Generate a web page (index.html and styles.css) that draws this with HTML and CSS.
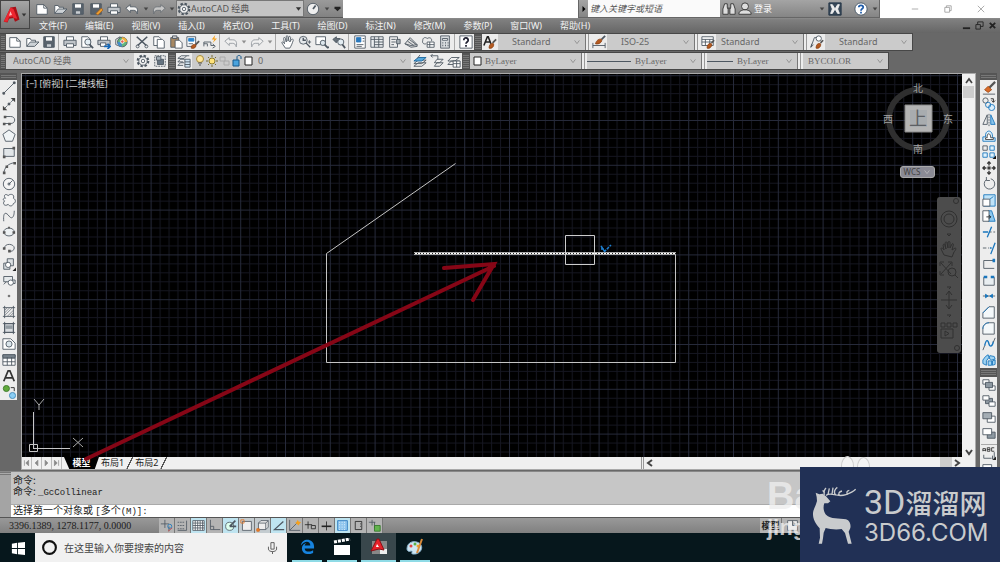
FILE: index.html
```html
<!DOCTYPE html>
<html lang="zh-CN">
<head>
<meta charset="utf-8">
<title>AutoCAD 经典</title>
<link rel="stylesheet" href="styles.css">
</head>
<body>
<svg class="sprite" aria-hidden="true">
<symbol id="new" viewBox="0 0 16 16"><path d="M2 3h8l4 4v7H2z" fill="#fff"/><path d="M10 3v4h4"/></symbol>
<symbol id="open" viewBox="0 0 16 16"><path d="M2 13V4h4l1 2h5v2" fill="#fff"/><path d="M2 13l4-5h10l-5 5z" fill="#cdd2d6"/></symbol>
<symbol id="save" viewBox="0 0 16 16"><path d="M2 2h12v12H2z" fill="#59636d"/><path d="M4 2h8v5H4z" fill="#fff"/><path d="M5 10h6v4H5z" fill="#c8cdd2"/></symbol>
<symbol id="saveas" viewBox="0 0 16 16"><path d="M2 2h12v12H2z" fill="#59636d"/><path d="M4 2h8v5H4z" fill="#fff"/><path d="M8 13l6-6 2 2-6 6z" fill="#f0a030" stroke="#a06020"/></symbol>
<symbol id="print" viewBox="0 0 16 16"><path d="M4 6V2h8v4" fill="#fff"/><path d="M1 6h14v6H1z" fill="#bfc4c9"/><path d="M4 10h8v4H4z" fill="#fff"/></symbol>
<symbol id="preview" viewBox="0 0 16 16"><path d="M2 2h7l3 3v9H2z" fill="#fff"/><circle cx="9" cy="8" r="3.500" fill="#e4eef4"/><path d="M11 11l4 4" stroke-width="2"/></symbol>
<symbol id="plot" viewBox="0 0 16 16"><path d="M4 6V2h8v4" fill="#fff"/><path d="M1 6h14v5H1z" fill="#bfc4c9"/><path d="M4 9h6v4H4z" fill="#fff"/><path d="M8 13h7m-3-3l3 3-3 3" stroke="#1668b8" stroke-width="2"/></symbol>
<symbol id="globe" viewBox="0 0 16 16"><path d="M2 5l5-3v11l-5-2z" fill="#eee"/><circle cx="9.500" cy="8" r="5.500" fill="#64b77b"/><path d="M9 2.500a5.500 5.500 0 0 1 6 5.500H9z" fill="#f3b13d" stroke="none"/><path d="M4 8h5v5.500a5.500 5.500 0 0 1-5-5.500z" fill="#438fcb" stroke="none"/><circle cx="9.500" cy="7.500" r="2" fill="#e86454" stroke="#fff"/></symbol>
<symbol id="cut" viewBox="0 0 16 16"><path d="M2 2l11 10M14 2L3 12" stroke-width="1.8"/><circle cx="3" cy="13" r="1.700"/><circle cx="13" cy="13" r="1.700"/></symbol>
<symbol id="copy" viewBox="0 0 16 16"><path d="M2 2h6l2 2v8H2z" fill="#fff"/><path d="M6 5h6l2 2v8H6z" fill="#fff"/></symbol>
<symbol id="paste" viewBox="0 0 16 16"><path d="M2 3h9v11H2z" fill="#a78862"/><path d="M4 1h5v3H4z" fill="#ccc"/><path d="M7 6h5l3 3v6H7z" fill="#fff"/></symbol>
<symbol id="match" viewBox="0 0 16 16"><path d="M1 2h10v11H1z" fill="#fff"/><path d="M3 4h6v3H3z" fill="#2b86ce" stroke="#2b86ce"/><path d="M3 10h5"/><path d="M15 7l-4 4" stroke="#555" stroke-width="2"/><path d="M6 15c0-3 2-5 5-4 1 3-2 5-5 4z" fill="#b65a20" stroke="#8a4216"/></symbol>
<symbol id="block" viewBox="0 0 16 16"><path d="M1 13V8h8v4h4M1 10h4v3" /><path d="M11 10l3 3-3 2"/><path d="M14 0l-4 5h3l-2 4 5-5h-3z" fill="#f6a11c" stroke="none"/></symbol>
<symbol id="undo" viewBox="0 0 16 16"><path d="M1 7l5-4v2.500h4c4 0 5 3 4 8-1-3-2-4-4-4H6V12z" fill="#f4f4f4"/></symbol>
<symbol id="redo" viewBox="0 0 16 16"><path d="M15 7l-5-4v2.500H6c-4 0-5 3-4 8 1-3 2-4 4-4h4V12z" fill="#f4f4f4"/></symbol>
<symbol id="drop" viewBox="0 0 8 8"><path d="M1 2h6L4 6z" fill="currentColor" stroke="none"/></symbol>
<symbol id="pan" viewBox="0 0 16 16"><path d="M5 15L1 9c0-2 2-1 3 1L3 4c0-2 2-1 2 0l1 4V2c0-2 2-1 2 0v5l1-5c1-1 2 0 2 1l-1 5 2-3c1-1 2 0 2 1-1 3-2 6-4 9z" fill="#fff"/></symbol>
<symbol id="zoom" viewBox="0 0 16 16"><circle cx="6" cy="6" r="4.500" fill="#e4e8eb"/><path d="M6 3v3h3M9 9l5 5" stroke-width="1.600"/><path d="M11 8h4M13 6v4"/></symbol>
<symbol id="zoomwin" viewBox="0 0 16 16"><path d="M1 2h11v9H1z" fill="#fff"/><circle cx="9" cy="9" r="3" fill="#dce6ec"/><path d="M11 11l4 4M14 14h2" stroke-width="2"/></symbol>
<symbol id="zoomprev" viewBox="0 0 16 16"><path d="M1 5l4-3v2h4v3H5v2z" fill="#68727b"/><circle cx="10" cy="8" r="3.500" fill="#e4eef4"/><path d="M12 11l3 4" stroke-width="2"/></symbol>
<symbol id="props" viewBox="0 0 16 16"><path d="M2 1h12v14H2z" fill="#fff"/><path d="M4 3h5v5H4z" fill="#2878bd" stroke="#2878bd"/><path d="M11 4h2M11 7h2M4 11h8M4 13h6"/></symbol>
<symbol id="dc" viewBox="0 0 16 16"><path d="M1 2h14v12H1zM5 2v12M10 2v12M1 5h14M5 8h10M5 11h10" fill="#eceff1"/></symbol>
<symbol id="palette" viewBox="0 0 16 16"><path d="M3 2h9v12H3zM5 5h5M5 8h5M5 11h3" fill="#eee"/><path d="M11 5h4v5h-4z" fill="#a9b1b7"/></symbol>
<symbol id="sheets" viewBox="0 0 16 16"><path d="M1 10l6-7 8 8M1 10l7 4 7-1v-2l-7 1z" fill="#ddd"/><path d="M4 7l7 5M6 5l8 6"/></symbol>
<symbol id="markup" viewBox="0 0 16 16"><path d="M2 6c0-3 3-4 5-2 3-2 6 0 5 3M2 6c-1 3 1 5 4 4"/><path d="M7 8h8v6H7zM7 11h8M10 8v6" fill="#fff"/></symbol>
<symbol id="calc" viewBox="0 0 16 16"><path d="M3 1h10v14H3z" fill="#d8dcdf"/><path d="M5 4h6v2H5z" fill="#fff"/><path d="M5 9h1m2 0h1m2 0h1M5 12h1m2 0h1m2 0h1" stroke-width="1.500"/></symbol>
<symbol id="help" viewBox="0 0 16 16"><path d="M1 1h14v14H1z" fill="#fff"/><path d="M5.500 6c0-4 5-3 5 0 0 2-2.500 2-2.500 4M8 11.500v2" stroke="#223" stroke-width="2"/></symbol>
<symbol id="brush" viewBox="0 0 16 16"><path d="M15 3L9 9" stroke="#555" stroke-width="2"/><path d="M4 15c0-4 2-6 6-6 1 4-2 7-6 6z" fill="#b65a20" stroke="#8a4216"/></symbol>
<symbol id="textstyle" viewBox="0 0 16 16"><path d="M1 12L5 2h1l3 8M3 8h5" stroke="#222" stroke-width="1.800"/><path d="M15 5l-4 4" stroke="#555" stroke-width="2"/><path d="M7 15c0-4 2-6 5-5 1 3-2 6-5 5z" fill="#b65a20" stroke="#8a4216"/></symbol>
<symbol id="dimstyle" viewBox="0 0 16 16"><path d="M1 9v6M15 9v6M1 12h14"/><path d="M15 1l-4 4" stroke-width="2"/><path d="M4 10c1-4 4-6 7-5 1 3-3 6-7 5z" fill="#b65a20" stroke="#8a4216"/></symbol>
<symbol id="tablestyle" viewBox="0 0 16 16"><path d="M1 2h13v10H1zM1 5h13M1 8h13M5 5v7M10 5v7" fill="#fff"/><path d="M15 6l-3 3" stroke="#555" stroke-width="2"/><path d="M7 15c0-4 2-6 5-5 1 3-2 6-5 5z" fill="#b65a20" stroke="#8a4216"/></symbol>
<symbol id="leader" viewBox="0 0 16 16"><path d="M1 14L5 3h5M1 14l1-4M1 14l3-3"/><circle cx="10" cy="4" r="3" fill="#fff"/><path d="M15 6l-3 3" stroke="#555" stroke-width="2"/><path d="M7 15c0-4 2-6 5-5 1 3-2 6-5 5z" fill="#b65a20" stroke="#8a4216"/></symbol>
<symbol id="gear" viewBox="0 0 16 16"><circle cx="8" cy="8" r="6" stroke-width="2.500" stroke-dasharray="2.700 2"/><circle cx="8" cy="8" r="4.800" fill="#f4f4f4"/><circle cx="8" cy="8" r="2"/></symbol>
<symbol id="workspace" viewBox="0 0 16 16"><path d="M2 2h12v12H2z" stroke-dasharray="2 1"/><path d="M5 6h7v6H5z" fill="#657481"/><path d="M4 3h5v4H4z" fill="#a9b4bd"/></symbol>
<symbol id="layers" viewBox="0 0 16 16"><path d="M1 5l4-3h9M1 5h7l3-3M1 9l3-3h5M1 13l3-3h4M1 9h6M1 13h6" /><path d="M9 6h6v9H9zM9 9h6M9 12h6" fill="#cfe3f0"/></symbol>
<symbol id="layera" viewBox="0 0 16 16"><path d="M1 14h9l5-4H6zM1 11h9l5-4H6z" fill="#f4f4f4"/><path d="M1 8h9l5-4H6z" fill="#58a9dc" stroke="#17639b"/><path d="M8 1l-3 4"/></symbol>
<symbol id="layerb" viewBox="0 0 16 16"><path d="M5 14h6l4-4H8zM5 10h6l4-4H8z" fill="#eee"/><path d="M1 2h8v4M3 0L1 2l2 2"/></symbol>
<symbol id="layerc" viewBox="0 0 16 16"><path d="M1 12h8l5-4H5zM1 8h8l5-4H5z" fill="#eee"/><path d="M7 8h8v7H7zM7 11h8M11 8v7" fill="#fff"/></symbol>
<symbol id="line" viewBox="0 0 16 16"><path d="M2 14L14 2"/><path d="M1 13h2v2H1zM13 1h2v2h-2z" fill="#555"/></symbol>
<symbol id="xline" viewBox="0 0 16 16"><path d="M2 14L14 2" stroke-dasharray="5 1"/><path d="M1 15v-5l5 5zM15 1v5l-5-5z" fill="#444" stroke="none"/><path d="M7 7h2v2H7z" fill="#555"/></symbol>
<symbol id="pline" viewBox="0 0 16 16"><path d="M3 4h7c6 0 6 8 0 8H3"/><path d="M1 11h3v3H1zM7 11h3v3H7zM2 3h3v3H2z" fill="#555" stroke="none"/></symbol>
<symbol id="polygon" viewBox="0 0 16 16"><path d="M8 1l7 5-3 8H4L1 6z" fill="#f0f4f6"/></symbol>
<symbol id="rect" viewBox="0 0 16 16"><path d="M2 4h12v9H2z" fill="#e1e5e8"/><path d="M1 12h3v3H1zM12 2h3v3h-3z" fill="#555" stroke="none"/></symbol>
<symbol id="arc" viewBox="0 0 16 16"><path d="M2 14C3 7 7 3 14 2"/><path d="M1 12h3v3H1zM4 5h3v3H4zM13 1h3v3h-3z" fill="#555" stroke="none"/></symbol>
<symbol id="circle" viewBox="0 0 16 16"><circle cx="8" cy="8" r="6.500" fill="#f5f5f5"/><path d="M8 8l4-4M7 7h2v2H7z"/></symbol>
<symbol id="cloud" viewBox="0 0 16 16"><path d="M4 6C1 3 4 0 7 3c3-3 8-1 6 3 4 2 2 6 0 6-1 4-5 3-6 1-4 3-7-1-4-4-3-1-1-4 1-3z" fill="#f5f5f5"/></symbol>
<symbol id="spline" viewBox="0 0 16 16"><path d="M2 14C1 2 5 4 8 8s6 2 6-6"/></symbol>
<symbol id="ellipse" viewBox="0 0 16 16"><ellipse cx="8" cy="8" rx="6" ry="4.500" fill="#edf1f3"/><path d="M1 7h3v3H1zM12 7h3v3h-3zM7 2h2v2H7z" fill="#555" stroke="none"/></symbol>
<symbol id="earc" viewBox="0 0 16 16"><path d="M3 8c0-6 11-5 11 0 0 3-3 4-6 4"/><path d="M1 7h3v3H1zM7 10h3v3H7z" fill="#555" stroke="none"/></symbol>
<symbol id="insert" viewBox="0 0 16 16"><path d="M6 2h7v8H9v4H2V7h4z" fill="#dce1e4"/><circle cx="7" cy="9" r="3" fill="#fff"/><path d="M16 12v4h-4z" fill="#222" stroke="none"/></symbol>
<symbol id="mkblock" viewBox="0 0 16 16"><path d="M2 4h10v6H2zM5 10l-3 3M12 8h3v4h-4" fill="#e6eaec"/><circle cx="10" cy="11" r="3" fill="#fff"/></symbol>
<symbol id="point" viewBox="0 0 16 16"><circle cx="8" cy="8" r="1.500" fill="#777" stroke="none"/></symbol>
<symbol id="hatch" viewBox="0 0 16 16"><path d="M1 3h14M1 13h14M3 1v14M13 1v14"/><path d="M3 6l3-3M3 9l6-6M3 12l9-9M6 13l7-7M9 13l4-4" stroke-width=".7"/></symbol>
<symbol id="gradient" viewBox="0 0 16 16"><path d="M3 3h10v10H3z" fill="#d8dce0"/><path d="M4 5h8v4H4z" fill="#939ca3" stroke="none"/><path d="M1 3h14M1 13h14M3 1v14M13 1v14"/></symbol>
<symbol id="region" viewBox="0 0 16 16"><path d="M1 2h9l5 5v7H1z" fill="#fff"/><circle cx="8" cy="8" r="3.500" fill="#dae5eb"/></symbol>
<symbol id="table" viewBox="0 0 16 16"><path d="M1 2h14v12H1zM1 6h14M1 10h14M6 4v10M11 4v10" fill="#fff"/><path d="M1 2h14v3H1z" fill="#7c8790"/></symbol>
<symbol id="mtext" viewBox="0 0 16 16"><path d="M2 14L7 2h2l5 12M4 10h8" stroke="#333" stroke-width="2"/></symbol>
<symbol id="addsel" viewBox="0 0 16 16"><circle cx="5" cy="4" r="3.500" fill="#61a93b" stroke="#387526"/><circle cx="12" cy="12" r="3.500" fill="#8acdf4" stroke="#3e87b7"/><path d="M10 3h4v4" stroke="#222"/></symbol>
<symbol id="erase" viewBox="0 0 16 16"><path d="M15 1L7 9" stroke="#555" stroke-width="2.500"/><path d="M3 10l4-4 4 4-4 3z" fill="#d96b29" stroke="#a04b18"/><path d="M1 15h14"/></symbol>
<symbol id="mcopy" viewBox="0 0 16 16"><circle cx="4" cy="4" r="3"/><circle cx="11" cy="12" r="3.500" fill="#dceffc" stroke="#1976bd"/><circle cx="7" cy="9" r="3" stroke="#1976bd"/><path d="M10 2h3v4m-2-2l2 2 2-2" stroke="#222"/></symbol>
<symbol id="mirror" viewBox="0 0 16 16"><path d="M6 2v11H1z" fill="#f0f0f0"/><path d="M10 2v11h5z" fill="#8bc6ed" stroke="#1976bd"/><path d="M8 1v14" stroke-dasharray="2 1"/></symbol>
<symbol id="offset" viewBox="0 0 16 16"><path d="M1 14h14v-4h-3c1-10-9-10-8-1H1z" fill="#d9effc" stroke="#1976bd"/><path d="M4 12h9v-2h-3c0-6-5-6-4 0H4z" stroke="#444" fill="#fff"/></symbol>
<symbol id="array" viewBox="0 0 16 16"><path d="M1 1h5v5H1z"/><path d="M9 1h5v5H9zM1 9h5v5H1zM9 9h5v5H9z" fill="#e1f2fc" stroke="#1976bd"/><path d="M16 12v4h-4z" fill="#111" stroke="none"/></symbol>
<symbol id="move" viewBox="0 0 16 16"><path d="M8 1v4M8 11v4M1 8h4M11 8h4M6 3l2-2 2 2M6 13l2 2 2-2M3 6L1 8l2 2M13 6l2 2-2 2M7 7h2v2H7z" stroke="#333" stroke-width="1.500"/></symbol>
<symbol id="rotate" viewBox="0 0 16 16"><path d="M5 3a6 6 0 1 0 5-1M5 0v4h4" /></symbol>
<symbol id="scale" viewBox="0 0 16 16"><path d="M2 2h13v13H2z" fill="#bfe3f9" stroke="#1976bd"/><path d="M1 7h8v8H1z" fill="#fff"/><path d="M9 7l4-3" stroke="#1976bd"/></symbol>
<symbol id="stretch" viewBox="0 0 16 16"><path d="M7 2l4 0 4 12H7z" fill="#8bc6ed" stroke="#1976bd"/><path d="M1 2h7v12H1z" fill="#fff"/><path d="M5 9h5m-2-2l2 2-2 2" stroke="#222"/></symbol>
<symbol id="trim" viewBox="0 0 16 16"><path d="M1 8h6M11 2L6 14" stroke="#1976bd" stroke-width="1.500"/><path d="M9 8h2m2 0h2"/></symbol>
<symbol id="extend" viewBox="0 0 16 16"><path d="M1 8h4m2 0h1"/><path d="M9 8h2M15 2L10 15" stroke="#1976bd" stroke-width="1.500"/></symbol>
<symbol id="breakpt" viewBox="0 0 16 16"><path d="M13 4H2v9h12"/><path d="M12 2h3v4h-3z" fill="#1976bd" stroke="none"/></symbol>
<symbol id="break" viewBox="0 0 16 16"><path d="M4 5H2v9h12V5h-2" fill="#e9eef1"/><path d="M2 3h4v3H2zM10 3h4v3h-4z" fill="#1976bd" stroke="none"/></symbol>
<symbol id="join" viewBox="0 0 16 16"><path d="M1 8h14"/><path d="M4 6l3 2-3 2zM12 6L9 8l3 2z" fill="#1976bd" stroke="#1976bd"/></symbol>
<symbol id="chamfer" viewBox="0 0 16 16"><path d="M1 15V9l7-7h6v13z" fill="#f4f8fa"/><path d="M1 9l7-7" stroke="#1976bd"/></symbol>
<symbol id="fillet" viewBox="0 0 16 16"><path d="M1 15V9c0-4 3-7 7-7h6v13z" fill="#f4f8fa"/><path d="M1 9c0-4 3-7 7-7" stroke="#1976bd"/></symbol>
<symbol id="blend" viewBox="0 0 16 16"><path d="M3 10C5 1 7 4 8 8s4 3 5-3" stroke="#1976bd" stroke-width="1.600"/><path d="M1 15l2-5M13 6l2-5"/></symbol>
<symbol id="explode" viewBox="0 0 16 16"><path d="M1 8l3-4 3-2 1 3-3 4v5l-4-2zM9 3l5 1 1 3-4 1-3-2zM7 9l4 0v5H7zM12 9l3-1v5l-3 1z" fill="#9fd3f2" stroke="#1976bd"/></symbol>
<symbol id="front" viewBox="0 0 16 16"><path d="M1 2h7v5H1zM8 9h7v5H8z" fill="#fff"/><path d="M4 5h8v6H4z" fill="#8d98a1"/></symbol>
<symbol id="back" viewBox="0 0 16 16"><path d="M4 5h8v6H4z" fill="#8d98a1"/><path d="M1 2h7v5H1zM8 9h7v5H8z" fill="#fff"/></symbol>
<symbol id="above" viewBox="0 0 16 16"><path d="M6 7h9v7H6z" fill="#fff"/><path d="M1 3h10v7H1z" fill="#a4adb4"/></symbol>
<symbol id="below" viewBox="0 0 16 16"><path d="M6 7h9v7H6z" fill="#8d98a1"/><path d="M1 3h10v7H1z" fill="#fff"/></symbol>
<symbol id="annot" viewBox="0 0 16 16"><path d="M2 10v4h9M14 7v7M12 11v4h3"/><path d="M1 6V3h3v3M1 5h3M6 2v4h3V2zM6 4h3M14 2h-3v4h3" stroke="#333"/><path d="M16 12v4h-4z" fill="#222" stroke="none"/></symbol>
<symbol id="up" viewBox="0 0 10 10"><path d="M2 7l3-4 3 4" stroke="#444" stroke-width="1.700"/></symbol>
<symbol id="chev" viewBox="0 0 10 10"><path d="M2 3l3 4 3-4"/></symbol>
<symbol id="left" viewBox="0 0 10 10"><path d="M7 2L3 5l4 3"/></symbol>
<symbol id="right" viewBox="0 0 10 10"><path d="M3 2l4 3-4 3"/></symbol>
<symbol id="alogo" viewBox="0 0 24 22"><path d="M1 20L10 1l7-1 5 17-6 3-2-5-6 1-2 5z" fill="#a80f16" stroke="none"/><path d="M1 20L10 1l4 2 5 13-5-1-1-2-5 1-2 6z" fill="#ed2630" stroke="none"/><path d="M10 6l2 5-4 1z" fill="#fbb" stroke="none"/></symbol>
</svg>

<header class="top">
  <button class="app" aria-label="应用程序"><svg class="mark"><use href="#alogo"/></svg><svg class="tiny"><use href="#drop"/></svg></button>
  <div class="title">
    <div class="quick">
      <button aria-label="新建"><svg><use href="#new"/></svg></button><button aria-label="打开"><svg><use href="#open"/></svg></button><button aria-label="保存"><svg><use href="#save"/></svg></button><button aria-label="另存为"><svg><use href="#saveas"/></svg></button><button aria-label="打印"><svg><use href="#print"/></svg></button><button aria-label="放弃"><svg><use href="#undo"/></svg></button><button class="dd" aria-label="放弃列表"><svg><use href="#drop"/></svg></button><button class="dim" aria-label="重做"><svg><use href="#redo"/></svg></button><button class="dd" aria-label="重做列表"><svg><use href="#drop"/></svg></button>
      <div class="combo space"><svg class="lead"><use href="#gear"/></svg><select aria-label="工作空间"><option>AutoCAD 经典</option></select><svg class="tiny"><use href="#drop"/></svg></div>
      <button aria-label="时间"><svg viewBox="0 0 16 16"><circle cx="8" cy="8" r="6.500" fill="#eee"/><path d="M8 8l3-4" stroke-width="2"/></svg></button><button class="dd" aria-label="更多"><svg><use href="#drop"/></svg></button><button class="dd end" aria-label="自定义"><svg viewBox="0 0 8 8"><path d="M0 1h8v2L4 7 0 3z" fill="#222" stroke="none"/></svg></button>
    </div>
    <div class="info">
      <button class="dd" aria-label="展开搜索"><svg viewBox="0 0 8 8"><path d="M2 0l4 4-4 4z" fill="#000" stroke="none"/></svg></button>
      <input type="text" placeholder="键入关键字或短语" aria-label="搜索帮助">
      <button aria-label="搜索"><svg viewBox="0 0 16 16"><path d="M3 2h3v4l1 2v6H1V8zM13 2h-3v4L9 8v6h6V8zM6 7h4" fill="#ddd" stroke="#333"/></svg></button>
      <button class="login"><svg viewBox="0 0 16 16"><circle cx="8" cy="5" r="4" fill="#ddd" stroke="#333"/><path d="M1 14c0-4 3-4 5-5h4c2 1 5 1 5 5z" fill="#ddd" stroke="#333"/></svg>登录</button>
      <button class="dd" aria-label="登录选项"><svg><use href="#drop"/></svg></button>
      <button aria-label="Exchange"><svg viewBox="0 0 16 16"><path d="M1 1h14v14H1z" fill="#3a4a5a" stroke="#1c2f42"/><path d="M3 3h2l3 5-3 5H3l2-5zM13 3h-2L8 8l3 5h2l-2-5z" fill="#eee" stroke="#eee"/></svg></button>
      <button class="q" aria-label="帮助"><svg viewBox="0 0 16 16"><circle cx="8" cy="8" r="7" fill="#fff" stroke="#456"/><path d="M5.500 6c0-3 5-3 5 0 0 2-2.500 1.500-2.500 4M8 11v2" stroke="#1f5caa" stroke-width="2"/></svg></button>
      <button class="dd" aria-label="帮助选项"><svg><use href="#drop"/></svg></button>
    </div>
    <div class="win"><button aria-label="最小化"><svg viewBox="0 0 10 10"><path d="M1 5h8"/></svg></button><button aria-label="还原"><svg viewBox="0 0 10 10"><path d="M1 3h6v6H1zM3 3V1h6v6H7"/></svg></button><button aria-label="关闭"><svg viewBox="0 0 10 10"><path d="M1 1l8 8M9 1L1 9"/></svg></button></div>
  </div>
  <nav class="menu">
    <button>文件(F)</button><button>编辑(E)</button><button>视图(V)</button><button>插入(I)</button><button>格式(O)</button><button>工具(T)</button><button>绘图(D)</button><button>标注(N)</button><button>修改(M)</button><button>参数(P)</button><button>窗口(W)</button><button>帮助(H)</button>
    <span class="docwin"><button aria-label="最小化文档"><svg viewBox="0 0 10 10"><path d="M1 8h8" stroke-width="2"/></svg></button><button aria-label="还原文档"><svg viewBox="0 0 10 10"><path d="M1 4h5v5H1zM3 4V1h6v5H6"/></svg></button><button aria-label="关闭文档"><svg viewBox="0 0 10 10"><path d="M2 2l6 6M8 2L2 8" stroke-width="2"/></svg></button></span>
  </nav>
</header>

<div class="bar">
  <i class="grip"></i>
  <button aria-label="新建"><svg><use href="#new"/></svg></button><button aria-label="打开"><svg><use href="#open"/></svg></button><button aria-label="保存"><svg><use href="#save"/></svg></button><i class="sep"></i><button aria-label="打印"><svg><use href="#print"/></svg></button><button aria-label="打印预览"><svg><use href="#preview"/></svg></button><button aria-label="发布"><svg><use href="#plot"/></svg></button><button aria-label="三维打印"><svg><use href="#globe"/></svg></button><i class="sep"></i><button aria-label="剪切"><svg><use href="#cut"/></svg></button><button aria-label="复制"><svg><use href="#copy"/></svg></button><button aria-label="粘贴"><svg><use href="#paste"/></svg></button><button aria-label="特性匹配"><svg><use href="#match"/></svg></button><button aria-label="块编辑器"><svg><use href="#block"/></svg></button><i class="sep"></i><button class="dim" aria-label="放弃"><svg><use href="#undo"/></svg></button><button class="dd dim" aria-label="放弃列表"><svg><use href="#drop"/></svg></button><button class="dim" aria-label="重做"><svg><use href="#redo"/></svg></button><button class="dd dim" aria-label="重做列表"><svg><use href="#drop"/></svg></button><i class="sep mid"></i><button aria-label="平移"><svg><use href="#pan"/></svg></button><button aria-label="缩放"><svg><use href="#zoom"/></svg></button><button aria-label="窗口缩放"><svg><use href="#zoomwin"/></svg></button><button aria-label="缩放上一个"><svg><use href="#zoomprev"/></svg></button><i class="sep"></i><button aria-label="特性"><svg><use href="#props"/></svg></button><button aria-label="设计中心"><svg><use href="#dc"/></svg></button><button aria-label="工具选项板"><svg><use href="#palette"/></svg></button><button aria-label="图纸集"><svg><use href="#sheets"/></svg></button><button aria-label="标记集"><svg><use href="#markup"/></svg></button><button aria-label="计算器"><svg><use href="#calc"/></svg></button><i class="sep"></i><button aria-label="帮助"><svg><use href="#help"/></svg></button>
  <i class="grip wide"></i>
  <button aria-label="文字样式"><svg><use href="#textstyle"/></svg></button>
  <div class="combo style in"><select aria-label="文字样式"><option>Standard</option></select><svg class="tiny"><use href="#chev"/></svg></div><i class="sep dbl"></i>
  <button aria-label="标注样式"><svg><use href="#dimstyle"/></svg></button>
  <div class="combo style in"><select aria-label="标注样式"><option>ISO-25</option></select><svg class="tiny"><use href="#chev"/></svg></div><i class="sep dbl"></i>
  <button aria-label="表格样式"><svg><use href="#tablestyle"/></svg></button>
  <div class="combo style"><select aria-label="表格样式"><option>Standard</option></select><svg class="tiny"><use href="#chev"/></svg></div><i class="sep dbl"></i>
  <button aria-label="多重引线样式"><svg><use href="#leader"/></svg></button>
  <div class="combo style in"><select aria-label="引线样式"><option>Standard</option></select><svg class="tiny"><use href="#chev"/></svg></div>
</div>

<div class="bar">
  <i class="grip"></i>
  <div class="combo ws"><select aria-label="工作空间"><option>AutoCAD 经典</option></select><svg class="tiny"><use href="#chev"/></svg></div>
  <button aria-label="设置"><svg><use href="#gear"/></svg></button><button aria-label="我的工作空间"><svg><use href="#workspace"/></svg></button>
  <i class="grip wide"></i>
  <button aria-label="图层特性"><svg><use href="#layers"/></svg></button>
  <div class="combo layer"><svg class="lead" viewBox="0 0 64 14"><circle cx="8" cy="5" r="3.500" fill="#ffe69a" stroke="#a58a3a"/><path d="M6 9h4M7 11h2" stroke="#555"/><circle cx="20" cy="7" r="3" fill="#ffe27a" stroke="#8a7a30"/><path d="M20 1v2M20 11v2M14 7h2M24 7h2M16 3l1 1M23 10l1 1M24 3l-1 1M17 10l-1 1" stroke="#776a30"/><path d="M28 3h5v4h-5zM32 7h5v4h-5z" stroke="#aaa"/><path d="M41 6h6v6h-6z" fill="#4aa3dd" stroke="#17588b"/><path d="M45 6V3c0-2 4-2 4 0v2" stroke="#17588b"/><path d="M53 3h7v8h-7z" fill="#fff" stroke="#222"/></svg><select aria-label="图层"><option>0</option></select><svg class="tiny"><use href="#chev"/></svg></div>
  <button aria-label="置为当前"><svg><use href="#layera"/></svg></button><button aria-label="上一个图层"><svg><use href="#layerb"/></svg></button><button aria-label="图层状态"><svg><use href="#layerc"/></svg></button>
  <i class="grip wide"></i>
  <div class="combo color serif"><svg class="lead" viewBox="0 0 14 14"><path d="M4 3h7v8H4z" fill="#fff" stroke="#222"/></svg><select aria-label="颜色"><option>ByLayer</option></select><svg class="tiny"><use href="#chev"/></svg></div><i class="sep dbl"></i>
  <div class="combo ltype serif"><svg class="lead" viewBox="0 0 44 14"><path d="M0 7.500h44"/></svg><select aria-label="线型"><option>ByLayer</option></select><svg class="tiny"><use href="#chev"/></svg></div><i class="sep dbl"></i>
  <div class="combo lweight serif"><svg class="lead" viewBox="0 0 26 14"><path d="M0 7.500h26"/></svg><select aria-label="线宽"><option>ByLayer</option></select><svg class="tiny"><use href="#chev"/></svg></div><i class="sep dbl"></i>
  <div class="combo pstyle serif"><select aria-label="打印样式"><option>BYCOLOR</option></select><svg class="tiny"><use href="#chev"/></svg></div>
</div>

<main class="work">
  <aside class="tools">
    <i class="grip"></i>
    <button aria-label="直线"><svg><use href="#line"/></svg></button><button aria-label="构造线"><svg><use href="#xline"/></svg></button><button aria-label="多段线"><svg><use href="#pline"/></svg></button><button aria-label="多边形"><svg><use href="#polygon"/></svg></button><button aria-label="矩形"><svg><use href="#rect"/></svg></button><button aria-label="圆弧"><svg><use href="#arc"/></svg></button><button aria-label="圆"><svg><use href="#circle"/></svg></button><button aria-label="修订云线"><svg><use href="#cloud"/></svg></button><button aria-label="样条曲线"><svg><use href="#spline"/></svg></button><button aria-label="椭圆"><svg><use href="#ellipse"/></svg></button><button aria-label="椭圆弧"><svg><use href="#earc"/></svg></button><button aria-label="插入块"><svg><use href="#insert"/></svg></button><button aria-label="创建块"><svg><use href="#mkblock"/></svg></button><button aria-label="点"><svg><use href="#point"/></svg></button><button aria-label="图案填充"><svg><use href="#hatch"/></svg></button><button aria-label="渐变色"><svg><use href="#gradient"/></svg></button><button aria-label="面域"><svg><use href="#region"/></svg></button><button aria-label="表格"><svg><use href="#table"/></svg></button><button aria-label="多行文字"><svg><use href="#mtext"/></svg></button><button aria-label="添加选定对象"><svg><use href="#addsel"/></svg></button>
  </aside>

  <section class="doc">
    <div class="canvas">
      <svg class="drawing">
        <defs>
          <pattern id="grid" width="44.800" height="44.800" patternUnits="userSpaceOnUse" x="61" y="120">
            <path d="M9.460 0v45M18.420 0v45M27.380 0v45M36.340 0v45M0 9.460h45M0 18.420h45M0 27.380h45M0 36.340h45" stroke="#151620"/>
            <path d="M.5 0v45M0 .5h45" stroke="#262a3a"/>
          </pattern>
        </defs>
        <g transform="translate(-22 -74)">
          <rect x="22" y="74" width="100%" height="100%" fill="url(#grid)" stroke="none"/>
          <path d="M455.500 163.500L326.500 253.500V362.500H675.500V253.500" stroke="#c4c4c4"/>
          <path d="M414 253.500H676" stroke="#aaa" stroke-width="3"/>
          <path d="M415 253.500H676" stroke="#fff" stroke-width="1"/><path d="M414 253.500H676" stroke="#222" stroke-dasharray="1 2"/>
          <path d="M565.500 235.500h29v29h-29z" stroke="#ccc"/>
          <path d="M604 252l7-7M601 246l4 6M601 249h3" stroke="#1c7fd0" stroke-width="1.500" stroke-dasharray="3 1"/>
          <path d="M33.500 412v36M33 448.500H70M29.500 444.500h8v7h-8z" stroke="#c8c8c8"/>
          <path d="M34 399l5 6 5-6M39 404v6M73 438l10 9M83 438l-10 9" stroke="#aaa"/>
          <path d="M86 459L494 266M444 268L494 264L473 300" stroke="#860616" stroke-width="4" stroke-linecap="round"/>
        </g>
      </svg>
      <div class="viewlabel">[−] [俯视] [二维线框]</div>
      <svg class="cube" viewBox="0 0 80 80" role="img" aria-label="ViewCube">
        <circle cx="38" cy="40" r="29" stroke="#2f2f2f" stroke-width="6"/>
        <path d="M25 26h27v27H25z" fill="#b4b4b4" stroke="#888"/><path d="M30 31h17v17H30z" fill="#a8acaf" stroke="none"/>
        <g class="cubetext"><text x="38" y="13">北</text><text x="38" y="74">南</text><text x="8" y="44">西</text><text x="68" y="44">东</text><text class="face" x="38" y="46">上</text></g>
      </svg>
      <button class="wcs">WCS <svg class="tiny"><use href="#chev"/></svg></button>
      <div class="navbar"><svg viewBox="0 0 24 156"><circle cx="19" cy="4" r="2.500"/><circle cx="12" cy="22" r="8"/><circle cx="12" cy="22" r="5"/><path d="M10 37h4l-2 2zM7 58L4 52c0-2 2-1 3 1l-1-5c1-2 2 0 2 1l1 3-1-6c1-2 2-1 2 0l1 5v-6c2-1 2 0 2 1v5l2-4c1-1 2 0 1 2l-1 4 3-2c2 0 0 3-1 4l-2 5zM4 66l10 11M14 66L4 77M3 69v-4h4M11 65h4v4M3 74v4h4"/><circle cx="15" cy="75" r="4"/><path d="M18 78l3 3M10 90h4l-2 2M12 95v16M4 103h16M9 98l3-4 3 4M9 108l3 4 3-4M10 118h4l-2 2M4 126h4v4H4zM10 126h4v4h-4zM16 126h4v4h-4zM4 132h12v9H4zM8 134v5l4-2.500z"/><circle cx="20" cy="151" r="2.500"/></svg></div>
    </div>
    <div class="vscroll"><svg><use href="#up"/></svg><i></i><span></span><svg><use href="#chev"/></svg></div>
    <div class="tabs">
      <div class="pager"><button aria-label="第一个"><svg viewBox="0 0 10 10"><path d="M2 1v8"/><path d="M8 1L4 5l4 4z" fill="#888"/></svg></button><button aria-label="上一个"><svg viewBox="0 0 10 10"><path d="M7 1L3 5l4 4z" fill="#888"/></svg></button><button aria-label="下一个"><svg viewBox="0 0 10 10"><path d="M3 1l4 4-4 4z" fill="#888"/></svg></button><button aria-label="最后一个"><svg viewBox="0 0 10 10"><path d="M8 1v8"/><path d="M2 1l4 4-4 4z" fill="#888"/></svg></button></div>
      <button class="tab on">模型</button><button class="tab">布局1</button><i class="slash"></i><button class="tab">布局2</button><i class="slash"></i>
      <div class="hscroll"><svg><use href="#left"/></svg><span></span><i></i><svg><use href="#right"/></svg></div>
    </div>
  </section>

  <aside class="tools right">
    <i class="grip"></i>
    <button aria-label="删除"><svg><use href="#erase"/></svg></button><button aria-label="复制"><svg><use href="#mcopy"/></svg></button><button aria-label="镜像"><svg><use href="#mirror"/></svg></button><button aria-label="偏移"><svg><use href="#offset"/></svg></button><button aria-label="阵列"><svg><use href="#array"/></svg></button><button aria-label="移动"><svg><use href="#move"/></svg></button><button aria-label="旋转"><svg><use href="#rotate"/></svg></button><button aria-label="缩放"><svg><use href="#scale"/></svg></button><button aria-label="拉伸"><svg><use href="#stretch"/></svg></button><button aria-label="修剪"><svg><use href="#trim"/></svg></button><button aria-label="延伸"><svg><use href="#extend"/></svg></button><button aria-label="打断于点"><svg><use href="#breakpt"/></svg></button><button aria-label="打断"><svg><use href="#break"/></svg></button><button aria-label="合并"><svg><use href="#join"/></svg></button><button aria-label="倒角"><svg><use href="#chamfer"/></svg></button><button aria-label="圆角"><svg><use href="#fillet"/></svg></button><button aria-label="光顺曲线"><svg><use href="#blend"/></svg></button><button aria-label="分解"><svg><use href="#explode"/></svg></button>
    <i class="grip wide"></i>
    <button aria-label="前置"><svg><use href="#front"/></svg></button><button aria-label="后置"><svg><use href="#back"/></svg></button><button aria-label="置于对象之上"><svg><use href="#above"/></svg></button><button aria-label="置于对象之下"><svg><use href="#below"/></svg></button><i class="hsep"></i><button aria-label="注释前置"><svg><use href="#annot"/></svg></button><button aria-label="填充后置"><svg><use href="#below"/></svg></button>
  </aside>
</main>

<section class="command">
  <i class="cgrip"></i>
  <div class="log"><p>命令:</p><p>命令: <span>_GcCollinear</span></p></div>
  <div class="prompt"><label for="cmd">选择第一个对象或 <span>[</span>多个<span>(M)]:</span></label><input id="cmd" type="text"></div>
</section>

<footer class="status">
  <output>3396.1389, 1278.1177, 0.0000</output>
  <button aria-label="推断约束"><svg viewBox="0 0 16 16"><path d="M1 6h10M6 1v10M11 9v6"/><circle cx="12" cy="9" r="2.500" stroke="#1976bd"/><path d="M10 15l5-4" stroke="#c44"/></svg></button><button aria-label="捕捉"><svg viewBox="0 0 16 16"><path d="M2 4h9M2 8h9M2 12h9" stroke-dasharray="2 1"/><path d="M13 2v12H2"/></svg></button><button class="on" aria-label="栅格"><svg viewBox="0 0 16 16"><path d="M1 2h14v12H1zM4 2v12M7 2v12M10 2v12M13 2v12M1 5h14M1 8h14M1 11h14" fill="#fff"/></svg></button><button aria-label="正交"><svg viewBox="0 0 16 16"><path d="M3 1v12h12M3 9h4v4"/></svg></button><button class="on" aria-label="极轴"><svg viewBox="0 0 16 16"><circle cx="7" cy="9" r="5" fill="#dfe"/><path d="M7 9l7-7M7 9h8" stroke-width="2"/></svg></button><button class="half" aria-label="对象捕捉"><svg viewBox="0 0 16 16"><path d="M3 3h11v11H3z" fill="#eee"/><path d="M1 1h4v4H1z" stroke="#e17422"/></svg></button><button class="half" aria-label="三维对象捕捉"><svg viewBox="0 0 16 16"><path d="M3 5l3-3h9v8l-3 3H3zM3 5h9v8M12 5l3-3" fill="#eee"/><path d="M1 12h3v3H1z" fill="#ee8b32" stroke="#d86618"/></svg></button><button class="on" aria-label="对象追踪"><svg viewBox="0 0 16 16"><path d="M14 3L3 13h12" stroke-width="1.500"/></svg></button><button aria-label="动态 UCS"><svg viewBox="0 0 16 16"><path d="M2 1v13h13M2 14L11 5"/><path d="M12 1l1 2 3 1-2 2-1 2-2-2-2-1 2-2z" fill="#f6a11c" stroke="none"/></svg></button><button aria-label="动态输入"><svg viewBox="0 0 16 16"><path d="M1 7h9M5 3v9M9 8h5v4H9z" stroke="#222"/></svg></button><button aria-label="线宽"><svg viewBox="0 0 16 16"><path d="M2 9h12" stroke="#222" stroke-width="2"/><path d="M8 3v11" stroke="#222"/></svg></button><button class="on" aria-label="透明度"><svg viewBox="0 0 16 16"><path d="M2 2h12v12H2z" fill="#8fc6ee" stroke="#2876bd"/><path d="M4 4h9M4 7h9M4 10h9M4 13h9" stroke="#fff" stroke-dasharray="1 2"/></svg></button><button aria-label="快捷特性"><svg viewBox="0 0 16 16"><path d="M4 3h8v10H4zM10 6h1M10 9h1" stroke="#222"/></svg></button><button aria-label="选择循环"><svg viewBox="0 0 16 16"><path d="M1 4h8M5 1v7M8 4v7h4"/><path d="M8 8h7v7H8z" fill="#62b34e" stroke="#2f7525"/></svg></button>
  <span class="fill"></span>
  <button class="space-btn">模型</button><button class="rbtn" aria-label="布局"><svg viewBox="0 0 16 16"><path d="M2 2h12v12H2zM8 2v6h6" fill="#eee"/></svg></button>
</footer>

<div class="taskbar">
  <button class="start" aria-label="开始"><svg viewBox="0 0 16 16"><path d="M1 3l6-1v6H1zM8 2l8-1v7H8zM1 9h6v6l-6-1zM8 9h8v7l-8-1z" fill="#fff" stroke="none"/></svg></button>
  <label class="search"><svg viewBox="0 0 16 16"><circle cx="8" cy="8" r="6" stroke="#111" stroke-width="2"/></svg><input type="text" placeholder="在这里输入你要搜索的内容"><svg viewBox="0 0 16 16"><path d="M6 2h4v8H6zM3 7v3c0 4 10 4 10 0V7M8 13v3" stroke="#444"/></svg></label>
  <button class="run" aria-label="Edge"><svg viewBox="0 0 16 16"><path d="M1 7C2-2 15-1 15 8v2H5c0 4 6 4 9 2v3C8 18 2 15 2 10c0-3 2-5 5-6-1 1-2 2-2 3h6C11 1 4 2 1 7z" fill="#1683de" stroke="none"/></svg></button><button class="run" aria-label="影视"><svg viewBox="0 0 18 18"><path d="M1 7h16v10H1z" fill="#fff" stroke="none"/><path d="M1 4l16-3" stroke="#fff" stroke-width="3" stroke-dasharray="3 1"/></svg></button><button class="run on" aria-label="AutoCAD"><svg viewBox="0 0 18 18"><path d="M2 3h15v13H2z" fill="#888" stroke="none"/><path d="M10 11h7v5h-7z" fill="#eee" stroke="none"/><path d="M1 13L7 1l2 0 5 11-5-1z" fill="#e7212a" stroke="#8a1016"/><path d="M7 6l2 3H6z" fill="#fff" stroke="none"/></svg></button><button class="run" aria-label="画图"><svg viewBox="0 0 18 18"><path d="M1 11C1 4 8 2 13 5c6 4 1 12-6 11-3 0 1-3-2-3-2 1-4 0-4-2z" fill="#cfe6f3" stroke="#8ab5cf"/><circle cx="5" cy="8" r="1.500" fill="#d44" stroke="none"/><circle cx="9" cy="6" r="1.500" fill="#5aae46" stroke="none"/><circle cx="12" cy="8" r="1.500" fill="#eea82a" stroke="none"/><path d="M16 1l-5 14" stroke="#d98a3a" stroke-width="2"/></svg></button>
</div>

<div class="mark-under" aria-hidden="true"><span class="paw"></span><span class="paw two"></span><b>Ba</b><em>jing</em></div>
<div class="brand">
  <svg viewBox="216 132 134 180"><path d="M225 155l11 5 10-2 10 8 13 15-7 6-11 0c-4 10-3 24 5 34 14 14 40 10 60 14 12 4 15 16 13 26l-5 11 9 36h-11l-9-32-10-12c-14 3-36 1-48-3l-6 14-2 17-3 16h-10l4-18-1-28c-13-16-20-26-20-44 0-12 8-22 12-38l-1-12z" fill="#c9cbcd" stroke="none"/><path d="M251 162c-2-9 0-16 5-21M256 163c18-12 30 8 60-2 12-4 22-9 29-16M262 160l4-18M274 160l3-20M286 163c-10-8-2-20 4-24M298 164c-8-6-2-12 6-14M322 160c-6-4-4-10 4-12M252 156l-6-8" stroke="#c9cbcd" stroke-width="4"/></svg>
  <div class="brandtext"><strong><span>3D</span>溜溜网</strong><small>3D66.COM</small></div>
</div>
</body>
</html>
```

FILE: styles.css
```css
* { box-sizing: border-box; }
html, body { height: 100%; margin: 0; }
body {
  display: flex; flex-direction: column; overflow: hidden; position: relative;
  background: #686868; color: #222;
  font: 9px/12px "Noto Sans", "Noto Sans CJK SC", sans-serif;
}
svg { fill: none; stroke: #4d5761; stroke-width: 1; flex: none; }
.sprite { display: none; }
button, select, input { font: inherit; color: inherit; border: 0; padding: 0; margin: 0; background: none; border-radius: 0; outline: 0; min-width: 0; }
button { display: flex; align-items: center; justify-content: center; flex: none; white-space: nowrap; }
button svg { width: 14px; height: 14px; display: block; }
.tiny { width: 8px; height: 8px; }
.dim { opacity: .55; }
.dd { width: 9px; color: #444; }
.dd svg { width: 6px; height: 6px; }

/* title and menu */
.top { display: grid; grid-template-columns: 30px 1fr; grid-template-rows: 18px 15px; background: linear-gradient(#8b8b8b 55%, #7f7f7f 60%, #666); }
.app { grid-row: 1 / 3; height: 29px; background: linear-gradient(#a5a5a5, #777); border: 1px solid #444; }
.app .mark { width: 18px; height: 24px; }
.app .tiny { width: 6px; height: 6px; color: #333; }
.title { display: flex; background: #fff; }
.quick { display: flex; align-items: stretch; width: 313px; padding-left: 3px; background: linear-gradient(#9a9a9a, #828282); border-bottom: 1px solid #555; }
.quick > button { width: 18px; }
.quick > .dim { width: 17px; }
.quick > .dd { width: 9px; }
.quick > .end { width: 12px; }
.quick .end svg { width: 7px; }
.info { display: flex; width: 302px; margin-left: 235px; background: linear-gradient(#a4a4a4, #858585); border: 1px solid #666; border-top: 0; }
.info > button { width: 17px; }
.info > .dd { width: 9px; }
.info input { width: 132px; background: #fafafa; padding-left: 2px; font-style: italic; }
.info input::placeholder { color: #555; opacity: 1; }
.info > .login { width: auto; flex: 1; justify-content: flex-start; gap: 2px; padding-left: 1px; color: #fff; }
.info > .q { width: 27px; padding-left: 8px; }
.win { flex: 1; display: flex; justify-content: flex-end; gap: 25px; align-items: center; padding-right: 15px; }
.win svg { width: 8px; height: 8px; stroke: #999; }
.menu { display: flex; align-items: center; gap: 18px; padding-left: 9px; color: #f2f2f2; }
.docwin { display: flex; gap: 4px; margin-left: auto; padding-right: 3px; }
.docwin svg { width: 9px; height: 9px; stroke: #222; }

/* horizontal toolbars */
.bar { display: flex; align-self: flex-start; height: 18px; margin-top: 0; border: 1px solid #474747; border-left: 0; background: #ececec; }
.bar + .bar { margin: 1px 0 3px; }
.bar > button { width: 17px; }
.bar > .dd { width: 9px; }
.bar .combo + .sep + button, .bar .grip.wide + button { width: 16px; }
.grip { width: 6px; flex: none; background: repeating-linear-gradient(#555 0 1px, #777 1px 2px); border: 1px solid #555; }
.grip.wide { width: 8px; }
.sep { width: 4px; flex: none; background: linear-gradient(90deg, #ececec 1px, #aaa 1px 2px, #ececec 2px); }
.sep.mid { width: 5px; }
.sep.dbl { width: 6px; background: linear-gradient(90deg, #777 1px, #ececec 1px 3px, #999 3px 4px, #ececec 4px); }
.combo { display: grid; grid-template: 1fr / auto 1fr auto; align-items: center; background: #cbcbcb; color: #666; overflow: hidden; }
.combo select { grid-area: 1 / 1 / 2 / 4; width: 100%; height: 100%; appearance: none; padding-left: 5px; line-height: 14px; }
.combo .lead { grid-area: 1 / 1; height: 14px; z-index: 1; pointer-events: none; }
.combo .tiny { grid-area: 1 / 3; margin-right: 4px; z-index: 1; stroke: #888; pointer-events: none; }
.style { width: 87px; }
.in select { padding-left: 14px; }
.ws { width: 128px; }
.ws select { padding-left: 7px; }
.layer { width: 219px; }
.layer .lead { width: 64px; }
.layer select { padding-left: 66px; }
.serif { font-family: "Liberation Serif", serif; }
.color { width: 111px; }
.color .lead { width: 14px; }
.color select { padding-left: 15px; }
.ltype { width: 114px; }
.ltype .lead { width: 44px; }
.ltype select { padding-left: 48px; }
.lweight { width: 90px; }
.lweight .lead { width: 26px; }
.lweight select { padding-left: 30px; }
.pstyle { width: 85px; }
.space { width: 130px; border: 1px solid #777; background: #c4c4c4; color: #555; }
.space .lead { width: 14px; }
.space select { padding-left: 14px; }
.space .tiny { color: #333; width: 7px; margin-right: 1px; }

/* work area */
.work { flex: 1; min-height: 0; display: flex; gap: 4px; }
.tools { display: flex; flex-direction: column; align-self: flex-start; width: 17px; padding-left: 1px; background: #ededed; }
.tools .grip { width: auto; height: 7px; margin-left: -1px; }
.tools .grip.wide { height: 9px; }
.tools button { height: 16px; }
.tools.right { max-height: 100%; overflow: hidden; margin-right: 3px; }
.hsep { height: 4px; flex: none; border-bottom: 1px solid #aaa; }
.doc { flex: 1; min-width: 0; display: grid; grid-template: 1fr 12px / 1fr 13px; border: 1px solid #aaa; background: #f0f0f0; margin-bottom: 1px; }
.canvas { position: relative; background: #000; min-height: 0; min-width: 0; }
.drawing { position: absolute; inset: 0; width: 100%; height: 100%; overflow: visible; z-index: 1; pointer-events: none; clip-path: inset(0 0 -12px 0); }
.viewlabel { position: absolute; left: 4px; top: 4px; color: #d0d0d0; z-index: 2; }
.cube { position: absolute; right: 2px; top: 5px; width: 80px; height: 80px; z-index: 2; }
.cubetext { fill: #a0a0a0; stroke: none; text-anchor: middle; font-size: 10px; }
.face { fill: #5c6064; font-size: 18px; }
.wcs { position: absolute; right: 27px; top: 92px; width: 35px; height: 12px; border-radius: 3px; background: #8a8a94; color: #444; border: 1px solid #aaa; gap: 3px; font-size: 8px; z-index: 2; }
.wcs svg { width: 8px; height: 8px; stroke: #bbb; }
.navbar { position: absolute; right: 1px; top: 123px; width: 24px; border-radius: 3px; background: #4c4c4c; z-index: 2; }
.navbar svg { display: block; width: 24px; height: 156px; stroke: #303030; }
.vscroll { display: flex; flex-direction: column; align-items: center; padding: 2px 0 0; }
.vscroll svg, .hscroll svg { width: 10px; height: 10px; stroke: #444; stroke-width: 2; }
.vscroll i { width: 11px; height: 12px; background: #cdcdcd; }
.vscroll span { flex: 1; }
.tabs { grid-column: 1 / 3; display: flex; align-items: stretch; }
.pager { display: flex; }
.pager button { width: 10px; border-right: 1px solid #bbb; }
.pager svg { width: 7px; height: 8px; stroke: #888; }
.tab { padding: 0 2px; }
.tab.on { width: 35px; margin-left: 2px; background: #000; color: #fff; font-weight: 700; clip-path: polygon(0 0, 100% 0, 88% 100%, 15% 100%); }
.slash { width: 7px; background: linear-gradient(115deg, transparent 46%, #555 47% 57%, transparent 58%); }
.hscroll { display: flex; align-items: center; margin-left: auto; width: 35%; padding-left: 1px; border-left: 3px double #999; padding-right: 13px; }
.hscroll span { flex: 1; }
.hscroll i { width: 12px; height: 12px; background: #cdcdcd; }

/* command line */
.command { display: grid; grid-template: 32px 13px / 11px 1fr; border-top: 1px solid #888; background: #c6c6c6; color: #222; font: 10px/11px "Noto Sans CJK SC", sans-serif; }
.command span { font: 9px/11px "Liberation Mono", monospace; }
.cgrip { grid-row: 1 / 3; background: linear-gradient(#777 1px, #aaa 1px 2px, #777 2px 3px, #a4a4a4 3px); }
.log { padding: 2px 2px 0; }
.log p { margin: 0; }
.prompt { display: flex; background: #fff; padding-left: 2px; align-items: center; border-top: 1px solid #aaa; }
.prompt label { white-space: nowrap; }
.prompt input { flex: 1; height: 10px; }

/* status bar */
.status { display: flex; height: 16px; background: linear-gradient(#999, #808080); border-top: 1px solid #555; }
.status output { width: 159px; padding-left: 9px; font: 10px/16px "Liberation Serif", serif; color: #1c1c1c; white-space: nowrap; }
.status button { width: 16px; border-right: 1px solid #777; background: #b4b4b4; }
.status button svg { width: 13px; height: 13px; }
.status .on { background: #bfe4f0; }
.status .half { background: #c4ccd0; }
.fill { flex: 1; }
.status .space-btn { width: 22px; font-weight: 700; }
.status .rbtn { width: 218px; justify-content: flex-start; padding-left: 4px; }

/* taskbar */
.taskbar { display: flex; height: 29px; background: #06171c; }
.start { width: 35px; }
.start svg { width: 14px; height: 14px; }
.search { display: flex; align-items: center; width: 252px; padding: 0 8px 0 6px; gap: 6px; background: #f1f1f1; }
.search svg { width: 17px; height: 17px; }
.search svg:last-child { width: 13px; height: 13px; }
.search input { flex: 1; font-size: 10px; line-height: 14px; color: #333; }
.search input::placeholder { color: #444; opacity: 1; }
.run { width: 30px; margin-left: 5px; border-bottom: 2px solid #8fdbe6; }
.run svg { width: 18px; height: 18px; }
.run:nth-of-type(2) svg { width: 15px; height: 15px; }
.run.on { width: 35px; margin: 0 0 0 4px; background: #39474c; }
.run.on + .run { margin-left: 4px; }

/* overlays in the corner */
.mark-under { position: absolute; right: 0; bottom: 0; width: 235px; height: 106px; overflow: hidden; color: #eeec; font: 9px "Liberation Sans", sans-serif; }
.mark-under b { position: absolute; left: 2px; top: 15px; font-size: 38px; line-height: 50px; }
.mark-under em { position: absolute; left: 2px; top: 58px; font: 700 22px/28px "Liberation Sans", sans-serif; }
.paw { position: absolute; left: 76px; top: 0; width: 13px; height: 20px; border-radius: 50%; background: #f4f4f4; border: 1px solid #ccc; }
.paw.two { left: 92px; top: 1px; }
.brand { position: absolute; right: 0; bottom: 0; width: 200px; height: 95px; display: flex; align-items: center; gap: 6px; padding-left: 12px; background: #213055; color: #c9cbcd; }
.brand svg { width: 46px; height: 60px; }
.brandtext { display: flex; flex-direction: column; gap: 3px; padding-top: 3px; }
.brandtext strong { font: 500 27px/30px "Noto Sans CJK SC", sans-serif; white-space: nowrap; }
.brandtext strong span { font: 400 34px/30px Roboto, sans-serif; }
.brandtext small { font: 400 24px/24px Inter, sans-serif; }
```
